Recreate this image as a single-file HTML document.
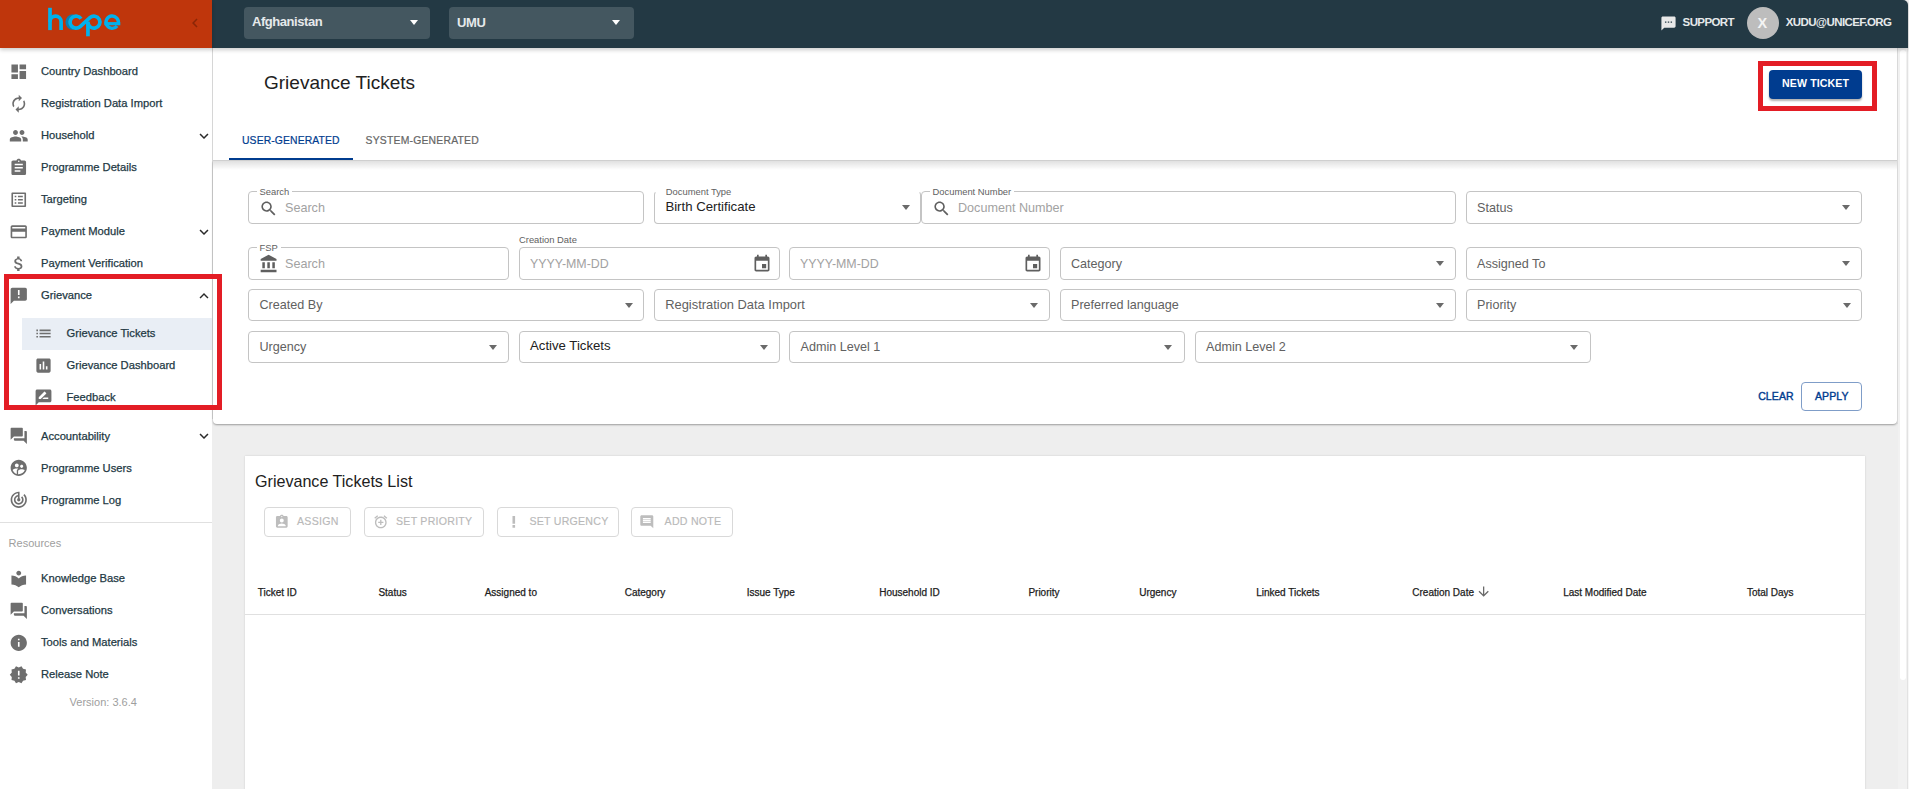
<!DOCTYPE html><html><head><meta charset="utf-8"><style>*{box-sizing:border-box;margin:0;padding:0}
html,body{width:1909px;height:789px;overflow:hidden;background:#eeeeee;font-family:"Liberation Sans",sans-serif}
.a{position:absolute}
.t{position:absolute;line-height:1;white-space:nowrap}
svg{display:block}
#hdr{left:212px;top:0;width:1696px;height:48px;background:#233944;border-top-right-radius:5px;z-index:2;box-shadow:0 2px 4px rgba(0,0,0,0.2)}
#logo{left:0;top:0;width:212px;height:48px;background:#bf360c;z-index:2;box-shadow:0 2px 4px rgba(0,0,0,0.2)}
#side{left:0;top:48px;width:212px;height:741px;background:#fff}
#sedge{left:212px;top:48px;width:1px;height:371px;background:#d6d6d6}
.sb{color:#233944;-webkit-text-stroke:0.25px #233944}
.dd{position:absolute;top:7px;height:32px;background:#445760;border-radius:4px}
.wt{color:#e6e9eb;font-weight:700}
#top{left:213px;top:48px;width:1684px;height:112px;background:#fff}
#filt{left:213px;top:161px;width:1684px;height:263px;background:#fff;border-bottom-right-radius:4px;border-bottom-left-radius:4px;box-shadow:0 1px 2px rgba(0,0,0,0.35)}
.fld{position:absolute;border:1px solid #c4c4c4;border-radius:4px;background:#fff}
.ph{color:#a2a2a2}
.pv{color:#616161}
.dk{color:#212121}
.lb{color:#616161;background:#fff;padding:0 3px}
.arr{position:absolute;width:0;height:0;border-left:4px solid transparent;border-right:4px solid transparent;border-top:5px solid #6a6a6a}
#tbl{left:245px;top:456px;width:1620px;height:340px;background:#fff;box-shadow:0 0 2px rgba(0,0,0,0.14)}
.btn{position:absolute;top:507px;height:30px;border:1px solid #d9d9d9;border-radius:4px}
.bt{color:#b9b9b9;letter-spacing:0.25px;-webkit-text-stroke:0.15px #b9b9b9}
.th{color:#212121;-webkit-text-stroke:0.25px #212121}
#scr{left:1898px;top:48px;width:11px;height:741px;background:#f1f1f1;border-right:2px solid #f7f7f7}
#thumb{left:2px;top:2px;width:6px;height:630px;background:#fff;border-radius:3px}
#scrl{left:1907px;top:48px;width:1px;height:741px;background:#e2e2e2}
#pedge{left:1897px;top:48px;width:1px;height:376px;background:#d9d9d9}
</style></head><body>
<div id="hdr" class="a"></div><div id="logo" class="a"></div>
<div id="side" class="a"></div><div id="sedge" class="a"></div>
<div id="top" class="a"></div><div id="filt" class="a"></div><div id="tbl" class="a"></div>
<div id="scr" class="a"><div id="thumb" class="a"></div></div><div id="scrl" class="a"></div><div id="pedge" class="a"></div>
<div class="a" style="left:0;top:0;z-index:3">
<svg class="a" style="left:40px;top:0" width="90" height="44" viewBox="40 0 90 44">
<path d="M73.30 28.15A6 6 0 0 1 73.30 16.15" fill="none" stroke="#0b7fb2" stroke-width="3.8"/>
<g fill="none" stroke="#00b1ec" stroke-width="3.7">
<path d="M50 7.8V30.1"/>
<path d="M50 21.75A5.55 5.55 0 0 1 61.1 21.75V30.1"/>
<path d="M81.01 18.71A6 6 0 1 0 80.13 26.59L89.92 17.71A6 6 0 1 1 87.95 22.15"/>
<path d="M87.95 21.5V36.3"/>
<path d="M104.40 23.7H120.3" stroke-width="3.2"/>
<path d="M118.20 23.7A6.2 6.2 0 1 0 117.09 25.97" stroke-width="3.4"/>
</g>
</svg>
<svg class="a" style="left:186px;top:14px" width="18" height="18" viewBox="0 0 24 24"><path fill="#8a2607" d="M15.41 7.41L14 6l-6 6 6 6 1.41-1.41L10.83 12z"/></svg>
<div class="dd" style="left:244px;width:186px"></div>
<div class="dd" style="left:449px;width:185px"></div>
<div class="t wt" style="left:252px;top:15.10px;font-size:13px;letter-spacing:-0.45px">Afghanistan</div>
<div class="t wt" style="left:457px;top:16.30px;font-size:13px;letter-spacing:-0.4px">UMU</div>
<div class="arr" style="left:410px;top:20px;border-top-color:#fff"></div>
<div class="arr" style="left:612px;top:20px;border-top-color:#fff"></div>
<svg class="a" style="left:1659.6px;top:14.6px" width="17" height="17" viewBox="0 0 24 24"><path fill="#e8e8e8" d="M20 2H4c-1.1 0-1.99.9-1.99 2L2 22l4-4h14c1.1 0 2-.9 2-2V4c0-1.1-.9-2-2-2zM9 11H7V9h2v2zm4 0h-2V9h2v2zm4 0h-2V9h2v2z"/></svg>
<div class="t wt" style="left:1682.6px;top:17.07px;font-size:11.5px;letter-spacing:-0.6px">SUPPORT</div>
<div class="a" style="left:1747px;top:7px;width:32px;height:32px;border-radius:50%;background:#bdbdbd"></div>
<div class="t wt" style="left:1757.6px;top:15.63px;font-size:14.5px;color:#f4f4f4">X</div>
<div class="t wt" style="left:1785.7px;top:17.07px;font-size:11.5px;letter-spacing:-0.6px">XUDU@UNICEF.ORG</div>
</div>
<div class="a" style="left:22px;top:318px;width:190px;height:32px;background:#e9eef5"></div>
<svg class="a" style="left:9.1px;top:61.5px" width="19.5" height="19.5" viewBox="0 0 24 24"><path fill="#6e6e6e" d="M3 13h8V3H3v10zm0 8h8v-6H3v6zm10 0h8V11h-8v10zm0-18v6h8V3h-8z"/></svg>
<div class="t sb" style="left:41px;top:65.52px;font-size:11.2px;">Country Dashboard</div>
<svg class="a" style="left:9.1px;top:93.5px" width="19.5" height="19.5" viewBox="0 0 24 24"><path fill="#6e6e6e" d="M12 6v3l4-4-4-4v3c-4.42 0-8 3.58-8 8 0 1.57.46 3.03 1.24 4.26L6.7 14.8c-.45-.83-.7-1.79-.7-2.8 0-3.31 2.69-6 6-6zm6.76 1.74L17.3 9.2c.44.84.7 1.79.7 2.8 0 3.31-2.69 6-6 6v-3l-4 4 4 4v-3c4.42 0 8-3.58 8-8 0-1.57-.46-3.030-1.24-4.26z"/></svg>
<div class="t sb" style="left:41px;top:97.52px;font-size:11.2px;">Registration Data Import</div>
<svg class="a" style="left:9.1px;top:125.5px" width="19.5" height="19.5" viewBox="0 0 24 24"><path fill="#6e6e6e" d="M16 11c1.66 0 2.99-1.34 2.99-3S17.66 5 16 5c-1.66 0-3 1.34-3 3s1.34 3 3 3zm-8 0c1.66 0 2.99-1.34 2.99-3S9.66 5 8 5C6.34 5 5 6.34 5 8s1.34 3 3 3zm0 2c-2.33 0-7 1.17-7 3.5V19h14v-2.5c0-2.33-4.67-3.5-7-3.5zm8 0c-.29 0-.62.02-.97.05 1.16.84 1.970 1.97 1.97 3.45V19h6v-2.5c0-2.33-4.67-3.5-7-3.5z"/></svg>
<div class="t sb" style="left:41px;top:129.52px;font-size:11.2px;">Household</div>
<svg class="a" style="left:194.5px;top:127px" width="18" height="18" viewBox="0 0 24 24"><path fill="#2a2a2a" d="M16.59 8.59L12 13.17 7.41 8.59 6 10l6 6 6-6z"/></svg>
<svg class="a" style="left:9.1px;top:157.5px" width="19.5" height="19.5" viewBox="0 0 24 24"><path fill="#6e6e6e" d="M19 3h-4.18C14.4 1.84 13.3 1 12 1c-1.3 0-2.4.84-2.82 2H5c-1.1 0-2 .9-2 2v14c0 1.1.9 2 2 2h14c1.1 0 2-.9 2-2V5c0-1.1-.9-2-2-2zm-7 0c.55 0 1 .45 1 1s-.45 1-1 1-1-.45-1-1 .45-1 1-1zm2 14H7v-2h7v2zm3-4H7v-2h10v2zm0-4H7V7h10v2z"/></svg>
<div class="t sb" style="left:41px;top:161.52px;font-size:11.2px;">Programme Details</div>
<svg class="a" style="left:9.1px;top:189.5px" width="19.5" height="19.5" viewBox="0 0 24 24"><path fill="#6e6e6e" d="M19 5v14H5V5h14m1.1-2H3.9c-.5 0-.9.4-.9.9v16.2c0 .4.4.9.9.9h16.2c.4 0 .9-.5.9-.9V3.9c0-.5-.5-.9-.9-.9zM11 7h6v2h-6V7zm0 4h6v2h-6v-2zm0 4h6v2h-6zM7 7h2v2H7zm0 4h2v2H7zm0 4h2v2H7z"/></svg>
<div class="t sb" style="left:41px;top:193.52px;font-size:11.2px;">Targeting</div>
<svg class="a" style="left:9.1px;top:221.5px" width="19.5" height="19.5" viewBox="0 0 24 24"><path fill="#6e6e6e" d="M20 4H4c-1.11 0-1.99.89-1.99 2L2 18c0 1.11.89 2 2 2h16c1.11 0 2-.89 2-2V6c0-1.11-.89-2-2-2zm0 14H4v-6h16v6zm0-10H4V6h16v2z"/></svg>
<div class="t sb" style="left:41px;top:225.52px;font-size:11.2px;">Payment Module</div>
<svg class="a" style="left:194.5px;top:223px" width="18" height="18" viewBox="0 0 24 24"><path fill="#2a2a2a" d="M16.59 8.59L12 13.17 7.41 8.59 6 10l6 6 6-6z"/></svg>
<svg class="a" style="left:9.1px;top:253.5px" width="19.5" height="19.5" viewBox="0 0 24 24"><path fill="#6e6e6e" d="M11.8 10.9c-2.27-.59-3-1.2-3-2.15 0-1.09 1.01-1.85 2.7-1.85 1.78 0 2.44.85 2.5 2.1h2.21c-.07-1.72-1.12-3.3-3.21-3.81V3h-3v2.16c-1.94.42-3.5 1.68-3.5 3.61 0 2.31 1.91 3.46 4.7 4.13 2.5.6 3 1.48 3 2.41 0 .69-.49 1.79-2.7 1.79-2.06 0-2.87-.92-2.98-2.1h-2.2c.12 2.19 1.76 3.42 3.68 3.83V21h3v-2.15c1.95-.37 3.5-1.5 3.5-3.55 0-2.84-2.43-3.81-4.7-4.4z"/></svg>
<div class="t sb" style="left:41px;top:257.52px;font-size:11.2px;">Payment Verification</div>
<svg class="a" style="left:9.1px;top:285.5px" width="19.5" height="19.5" viewBox="0 0 24 24"><path fill="#6e6e6e" d="M20 2H4c-1.1 0-1.99.9-1.99 2L2 22l4-4h14c1.1 0 2-.9 2-2V4c0-1.1-.9-2-2-2zm-7 9h-2V5h2v6zm0 4h-2v-2h2v2z"/></svg>
<div class="t sb" style="left:41px;top:289.52px;font-size:11.2px;">Grievance</div>
<svg class="a" style="left:194.5px;top:287px" width="18" height="18" viewBox="0 0 24 24"><path fill="#2a2a2a" d="M12 8l-6 6 1.41 1.41L12 10.83l4.59 4.58L18 14z"/></svg>
<svg class="a" style="left:9.1px;top:425.8px" width="19.5" height="19.5" viewBox="0 0 24 24"><path fill="#6e6e6e" d="M21 6h-2v9H6v2c0 .55.45 1 1 1h11l4 4V7c0-.55-.45-1-1-1zm-4 6V3c0-.55-.45-1-1-1H3c-.55 0-1 .45-1 1v14l4-4h10c.55 0 1-.45 1-1z"/></svg>
<div class="t sb" style="left:41px;top:430.52px;font-size:11.2px;">Accountability</div>
<svg class="a" style="left:194.5px;top:426.5px" width="18" height="18" viewBox="0 0 24 24"><path fill="#2a2a2a" d="M16.59 8.59L12 13.17 7.41 8.59 6 10l6 6 6-6z"/></svg>
<svg class="a" style="left:9.1px;top:457.8px" width="19.5" height="19.5" viewBox="0 0 24 24"><path fill="#6e6e6e" d="M11.99 2c-5.52 0-10 4.48-10 10s4.48 10 10 10 10-4.48 10-10-4.48-10-10-10zm3.61 6.34c1.07 0 1.93.86 1.93 1.93 0 1.07-.86 1.93-1.93 1.93-1.07 0-1.93-.86-1.93-1.93-.01-1.07.86-1.93 1.930-1.93zm-6-1.58c1.3 0 2.36 1.06 2.36 2.36 0 1.3-1.06 2.36-2.36 2.36s-2.36-1.06-2.36-2.36c0-1.31 1.05-2.36 2.36-2.36zm0 9.13v3.75c-2.4-.75-4.3-2.6-5.14-4.96 1.05-1.12 3.67-1.69 5.14-1.69.53 0 1.2.08 1.82.21-1.44.76-1.82 1.77-1.82 2.69zM11.99 20c-.27 0-.53-.01-.79-.04v-4.07c0-1.42 2.94-2.13 4.4-2.13 1.07 0 2.92.39 3.84 1.15-1.17 2.92-4.02 4.99-7.45 5.09z"/></svg>
<div class="t sb" style="left:41px;top:462.52px;font-size:11.2px;">Programme Users</div>
<svg class="a" style="left:9.1px;top:489.8px" width="19.5" height="19.5" viewBox="0 0 24 24"><path fill="#6e6e6e" d="M19.07 4.93l-1.41 1.41C19.1 7.79 20 9.79 20 12c0 4.42-3.58 8-8 8s-8-3.58-8-8c0-4.08 3.05-7.44 7-7.93v2.02C8.16 6.57 6 9.03 6 12c0 3.31 2.69 6 6 6s6-2.69 6-6c0-1.66-.67-3.16-1.76-4.24l-1.41 1.41C15.55 9.9 16 10.9 16 12c0 2.21-1.79 4-4 4s-4-1.79-4-4c0-1.86 1.28-3.41 3-3.86v2.14c-.6.35-1 .98-1 1.72 0 1.1.9 2 2 2s2-.9 2-2c0-.74-.4-1.38-1-1.72V2h-1C6.48 2 2 6.48 2 12s4.48 10 10 10 10-4.48 10-10c0-2.760-1.12-5.26-2.93-7.07z"/></svg>
<div class="t sb" style="left:41px;top:494.52px;font-size:11.2px;">Programme Log</div>
<svg class="a" style="left:9.1px;top:568.5px" width="19.5" height="19.5" viewBox="0 0 24 24"><path fill="#6e6e6e" d="M12 11.55C9.64 9.35 6.48 8 3 8v11c3.48 0 6.64 1.35 9 3.55 2.36-2.19 5.52-3.55 9-3.55V8c-3.48 0-6.64 1.35-9 3.55zM12 8c1.66 0 3-1.34 3-3s-1.34-3-3-3-3 1.34-3 3 1.34 3 3 3z"/></svg>
<div class="t sb" style="left:41px;top:572.52px;font-size:11.2px;">Knowledge Base</div>
<svg class="a" style="left:9.1px;top:600.5px" width="19.5" height="19.5" viewBox="0 0 24 24"><path fill="#6e6e6e" d="M21 6h-2v9H6v2c0 .55.45 1 1 1h11l4 4V7c0-.55-.45-1-1-1zm-4 6V3c0-.55-.45-1-1-1H3c-.55 0-1 .45-1 1v14l4-4h10c.55 0 1-.45 1-1z"/></svg>
<div class="t sb" style="left:41px;top:604.52px;font-size:11.2px;">Conversations</div>
<svg class="a" style="left:9.1px;top:632.5px" width="19.5" height="19.5" viewBox="0 0 24 24"><path fill="#6e6e6e" d="M12 2C6.48 2 2 6.48 2 12s4.48 10 10 10 10-4.48 10-10S17.52 2 12 2zm1 15h-2v-6h2v6zm0-8h-2V7h2v2z"/></svg>
<div class="t sb" style="left:41px;top:636.52px;font-size:11.2px;">Tools and Materials</div>
<svg class="a" style="left:9.1px;top:664.5px" width="19.5" height="19.5" viewBox="0 0 24 24"><path fill="#6e6e6e" d="M23 12l-2.44-2.78.34-3.68-3.61-.82-1.89-3.18L12 3 8.6 1.54 6.71 4.72l-3.61.81.34 3.68L1 12l2.44 2.78-.34 3.69 3.61.82 1.89 3.18L12 21l3.4 1.46 1.89-3.18 3.61-.82-.34-3.68L23 12zm-10 5h-2v-2h2v2zm0-4h-2V7h2v6z"/></svg>
<div class="t sb" style="left:41px;top:668.52px;font-size:11.2px;">Release Note</div>
<svg class="a" style="left:34.3px;top:324.2px" width="19" height="19" viewBox="0 0 24 24"><path fill="#6e6e6e" d="M3 13h2v-2H3v2zm0 4h2v-2H3v2zm0-8h2V7H3v2zm4 4h14v-2H7v2zm0 4h14v-2H7v2zM7 7v2h14V7H7z"/></svg>
<div class="t sb" style="left:66.5px;top:327.52px;font-size:11.2px;">Grievance Tickets</div>
<svg class="a" style="left:34.3px;top:356.2px" width="19" height="19" viewBox="0 0 24 24"><path fill="#6e6e6e" d="M19 3H5c-1.1 0-2 .9-2 2v14c0 1.1.9 2 2 2h14c1.1 0 2-.9 2-2V5c0-1.1-.9-2-2-2zM9 17H7v-7h2v7zm4 0h-2V7h2v10zm4 0h-2v-4h2v4z"/></svg>
<div class="t sb" style="left:66.5px;top:359.52px;font-size:11.2px;">Grievance Dashboard</div>
<svg class="a" style="left:34.3px;top:388.2px" width="19" height="19" viewBox="0 0 24 24"><path fill="#6e6e6e" d="M20 2H4c-1.1 0-1.99.9-1.99 2L2 22l4-4h14c1.1 0 2-.9 2-2V4c0-1.1-.9-2-2-2zM6 14v-2.47l6.88-6.88c.2-.2.51-.2.71 0l1.77 1.77c.2.2.2.51 0 .71L8.47 14H6zm12 0h-7.5l2-2H18v2z"/></svg>
<div class="t sb" style="left:66.5px;top:391.52px;font-size:11.2px;">Feedback</div>
<div class="a" style="left:0;top:522px;width:212px;height:1px;background:#e0e0e0"></div>
<div class="t " style="left:8.6px;top:538.49px;font-size:11px;color:#9e9e9e">Resources</div>
<div class="t " style="left:69.6px;top:696.89px;font-size:11px;color:#9e9e9e">Version: 3.6.4</div>
<div class="a" style="left:4px;top:274px;width:218px;height:136px;border:5px solid #e31d25"></div>
<div class="t " style="left:264px;top:72.92px;font-size:19px;color:#212121">Grievance Tickets</div>
<div class="a" style="left:1769px;top:70px;width:93px;height:29px;background:#003c8f;border-radius:4px;box-shadow:0 2px 2px rgba(0,0,0,0.3)"></div>
<div class="t wt" style="left:1782px;top:78.03px;font-size:10.6px;letter-spacing:0.12px;color:#fff">NEW TICKET</div>
<div class="a" style="left:1758px;top:61px;width:119px;height:50px;border:5px solid #e31d25"></div>
<div class="t " style="left:242px;top:136.20px;font-size:10.4px;color:#003c8f;letter-spacing:0.1px;-webkit-text-stroke:0.2px #003c8f">USER-GENERATED</div>
<div class="t " style="left:365.6px;top:136.20px;font-size:10.4px;color:#666;letter-spacing:0.2px;-webkit-text-stroke:0.2px #666">SYSTEM-GENERATED</div>
<div class="a" style="left:229px;top:158px;width:124px;height:2px;background:#003c8f"></div>
<div class="a" style="left:213px;top:160px;width:1684px;height:1px;background:#cfcfcf"></div>
<div class="a" style="left:213px;top:161px;width:1684px;height:9px;background:linear-gradient(rgba(0,0,0,0.12),rgba(0,0,0,0))"></div>
<div class="fld" style="left:248px;top:191px;width:396px;height:33px"></div>
<div class="t lb" style="left:259.5px;top:186.64px;font-size:9.4px;padding:0 3px;margin-left:-3px">Search</div>
<svg class="a" style="left:258.8px;top:198.6px" width="19.2" height="19.2" viewBox="0 0 24 24"><path fill="#5f5f5f" d="M15.5 14h-.79l-.28-.27C15.41 12.59 16 11.11 16 9.5 16 5.91 13.09 3 9.5 3S3 5.91 3 9.5 5.91 16 9.5 16c1.61 0 3.090-.59 4.23-1.57l.27.28v.79l5 4.99L20.49 19l-4.99-5zm-6 0C7.01 14 5 11.99 5 9.5S7.01 5 9.5 5 14 7.01 14 9.5 11.99 14 9.5 14z"/></svg>
<div class="t ph" style="left:285px;top:202.33px;font-size:12.6px;">Search</div>
<div class="fld" style="left:654px;top:191px;width:267px;height:33px;border-top-color:transparent"></div>
<div class="t " style="left:665.8px;top:187.34px;font-size:9.4px;color:#616161">Document Type</div>
<div class="t dk" style="left:665.4px;top:200.23px;font-size:13.2px;">Birth Certificate</div>
<div class="arr" style="left:901.5px;top:205px"></div>
<div class="fld" style="left:921px;top:191px;width:535px;height:33px"></div>
<div class="t lb" style="left:932.5px;top:186.64px;font-size:9.4px;padding:0 3px;margin-left:-3px">Document Number</div>
<svg class="a" style="left:931.5px;top:198.6px" width="19.2" height="19.2" viewBox="0 0 24 24"><path fill="#5f5f5f" d="M15.5 14h-.79l-.28-.27C15.41 12.59 16 11.11 16 9.5 16 5.91 13.09 3 9.5 3S3 5.91 3 9.5 5.91 16 9.5 16c1.61 0 3.090-.59 4.23-1.57l.27.28v.79l5 4.99L20.49 19l-4.99-5zm-6 0C7.01 14 5 11.99 5 9.5S7.01 5 9.5 5 14 7.01 14 9.5 11.99 14 9.5 14z"/></svg>
<div class="t ph" style="left:958px;top:202.33px;font-size:12.6px;">Document Number</div>
<div class="fld" style="left:1466px;top:191px;width:396px;height:33px"></div>
<div class="t pv" style="left:1477px;top:202.33px;font-size:12.6px;">Status</div>
<div class="arr" style="left:1842px;top:205px"></div>
<div class="fld" style="left:248px;top:247px;width:261px;height:33px"></div>
<div class="t lb" style="left:259.5px;top:243.04px;font-size:9.4px;padding:0 3px;margin-left:-3px">FSP</div>
<svg class="a" style="left:258.5px;top:253.8px" width="20" height="20" viewBox="0 0 24 24"><path fill="#5f5f5f" d="M4 10v7h3v-7H4zm6 0v7h3v-7h-3zM2 22h19v-3H2v3zm14-12v7h3v-7h-3zm-4.5-9L2 6v2h19V6l-9.5-5z"/></svg>
<div class="t ph" style="left:285px;top:258.33px;font-size:12.6px;">Search</div>
<div class="t " style="left:519px;top:235.04px;font-size:9.4px;color:#616161">Creation Date</div>
<div class="fld" style="left:519px;top:247px;width:261px;height:33px"></div>
<div class="t ph" style="left:530px;top:257.50px;font-size:12.4px;">YYYY-MM-DD</div>
<svg class="a" style="left:752.3px;top:253.8px" width="20" height="20" viewBox="0 0 24 24"><path fill="#5f5f5f" d="M17 12h-5v5h5v-5zM16 1v2H8V1H6v2H5c-1.11 0-1.99.9-1.99 2L3 19c0 1.1.89 2 2 2h14c1.1 0 2-.9 2-2V5c0-1.1-.9-2-2-2h-1V1h-2zm3 18H5V8h14v11z"/></svg>
<div class="fld" style="left:789px;top:247px;width:261px;height:33px"></div>
<div class="t ph" style="left:800px;top:257.50px;font-size:12.4px;">YYYY-MM-DD</div>
<svg class="a" style="left:1023.3px;top:253.8px" width="20" height="20" viewBox="0 0 24 24"><path fill="#5f5f5f" d="M17 12h-5v5h5v-5zM16 1v2H8V1H6v2H5c-1.11 0-1.99.9-1.99 2L3 19c0 1.1.89 2 2 2h14c1.1 0 2-.9 2-2V5c0-1.1-.9-2-2-2h-1V1h-2zm3 18H5V8h14v11z"/></svg>
<div class="fld" style="left:1060px;top:247px;width:396px;height:33px"></div>
<div class="t pv" style="left:1071px;top:258.33px;font-size:12.6px;">Category</div>
<div class="arr" style="left:1436px;top:261px"></div>
<div class="fld" style="left:1466px;top:247px;width:396px;height:33px"></div>
<div class="t pv" style="left:1477px;top:258.33px;font-size:12.6px;">Assigned To</div>
<div class="arr" style="left:1842px;top:261px"></div>
<div class="fld" style="left:248px;top:289px;width:396px;height:32px"></div>
<div class="t pv" style="left:259.5px;top:298.63px;font-size:12.6px;">Created By</div>
<div class="arr" style="left:624.5px;top:303px"></div>
<div class="fld" style="left:654px;top:289px;width:396px;height:32px"></div>
<div class="t pv" style="left:665.2px;top:299.38px;font-size:12.9px;">Registration Data Import</div>
<div class="arr" style="left:1029.5px;top:303px"></div>
<div class="fld" style="left:1060px;top:289px;width:396px;height:32px"></div>
<div class="t pv" style="left:1071px;top:298.63px;font-size:12.6px;">Preferred language</div>
<div class="arr" style="left:1435.5px;top:303px"></div>
<div class="fld" style="left:1466px;top:289px;width:396px;height:32px"></div>
<div class="t pv" style="left:1477px;top:298.63px;font-size:12.6px;">Priority</div>
<div class="arr" style="left:1842.5px;top:303px"></div>
<div class="fld" style="left:248px;top:331px;width:261px;height:32px"></div>
<div class="t pv" style="left:259.5px;top:341.33px;font-size:12.6px;">Urgency</div>
<div class="arr" style="left:489px;top:345px"></div>
<div class="fld" style="left:519px;top:331px;width:261px;height:32px"></div>
<div class="t dk" style="left:530px;top:338.83px;font-size:13.2px;">Active Tickets</div>
<div class="arr" style="left:760px;top:345px"></div>
<div class="fld" style="left:789px;top:331px;width:396px;height:32px"></div>
<div class="t pv" style="left:800.5px;top:341.33px;font-size:12.6px;">Admin Level 1</div>
<div class="arr" style="left:1164px;top:345px"></div>
<div class="fld" style="left:1195px;top:331px;width:396px;height:32px"></div>
<div class="t pv" style="left:1206px;top:341.33px;font-size:12.6px;">Admin Level 2</div>
<div class="arr" style="left:1570px;top:345px"></div>
<div class="t " style="left:1758.2px;top:391.11px;font-size:10.5px;color:#003c8f;letter-spacing:0.1px;-webkit-text-stroke:0.4px #003c8f">CLEAR</div>
<div class="a" style="left:1801px;top:382px;width:61px;height:29px;border:1px solid #7f9dc8;border-radius:4px"></div>
<div class="t " style="left:1815px;top:391.11px;font-size:10.5px;color:#003c8f;letter-spacing:0.1px;-webkit-text-stroke:0.4px #003c8f">APPLY</div>
<div class="t " style="left:255px;top:473.07px;font-size:16.1px;color:#212121">Grievance Tickets List</div>
<div class="btn" style="left:264px;width:87px"></div>
<svg class="a" style="left:274px;top:513.5px" width="15.6" height="15.6" viewBox="0 0 24 24"><path fill="#bdbdbd" d="M19 3h-4.18C14.4 1.84 13.3 1 12 1c-1.3 0-2.4.84-2.82 2H5c-1.1 0-2 .9-2 2v14c0 1.1.9 2 2 2h14c1.1 0 2-.9 2-2V5c0-1.1-.9-2-2-2zm-7 0c.55 0 1 .45 1 1s-.45 1-1 1-1-.45-1-1 .45-1 1-1zm0 4c1.66 0 3 1.34 3 3s-1.34 3-3 3-3-1.34-3-3 1.34-3 3-3zm6 12H6v-1.4c0-2 4-3.1 6-3.1s6 1.1 6 3.1V19z"/></svg>
<div class="t bt" style="left:297px;top:516.23px;font-size:10.6px;">ASSIGN</div>
<div class="btn" style="left:364px;width:120px"></div>
<svg class="a" style="left:373px;top:513.5px" width="15.6" height="15.6" viewBox="0 0 24 24"><path fill="#bdbdbd" d="M7.88 3.39L6.6 1.86 2 5.71l1.29 1.53 4.59-3.85zM22 5.72l-4.6-3.86-1.29 1.53 4.6 3.86L22 5.72zM12 4c-4.97 0-9 4.03-9 9s4.02 9 9 9c4.97 0 9-4.03 9-9s-4.03-9-9-9zm0 16c-3.87 0-7-3.13-7-7s3.13-7 7-7 7 3.13 7 7-3.13 7-7 7zm1-11h-2v3H8v2h3v3h2v-3h3v-2h-3V9z"/></svg>
<div class="t bt" style="left:396px;top:516.23px;font-size:10.6px;">SET PRIORITY</div>
<div class="btn" style="left:497px;width:122px"></div>
<svg class="a" style="left:506px;top:513.5px" width="15.6" height="15.6" viewBox="0 0 24 24"><path fill="#bdbdbd" d="M10 3h4v12h-4zM10 17h4v4h-4z"/></svg>
<div class="t bt" style="left:529.4px;top:516.23px;font-size:10.6px;">SET URGENCY</div>
<div class="btn" style="left:631px;width:102px"></div>
<svg class="a" style="left:639px;top:513.5px" width="15.6" height="15.6" viewBox="0 0 24 24"><path fill="#bdbdbd" d="M21.99 4c0-1.1-.89-2-1.99-2H4c-1.1 0-2 .9-2 2v12c0 1.1.9 2 2 2h14l4 4-.01-18zM18 14H6v-2h12v2zm0-3H6V9h12v2zm0-3H6V6h12v2z"/></svg>
<div class="t bt" style="left:664.6px;top:516.23px;font-size:10.6px;">ADD NOTE</div>
<div class="t th" style="left:257.7px;top:587.83px;font-size:10px;">Ticket ID</div>
<div class="t th" style="left:378.4px;top:587.83px;font-size:10px;">Status</div>
<div class="t th" style="left:484.7px;top:587.83px;font-size:10px;">Assigned to</div>
<div class="t th" style="left:624.7px;top:587.83px;font-size:10px;">Category</div>
<div class="t th" style="left:746.7px;top:587.83px;font-size:10px;">Issue Type</div>
<div class="t th" style="left:879.2px;top:587.83px;font-size:10px;">Household ID</div>
<div class="t th" style="left:1028.4px;top:587.83px;font-size:10px;">Priority</div>
<div class="t th" style="left:1139.2px;top:587.83px;font-size:10px;">Urgency</div>
<div class="t th" style="left:1256.2px;top:587.83px;font-size:10px;">Linked Tickets</div>
<div class="t th" style="left:1412.3px;top:587.83px;font-size:10px;">Creation Date</div>
<div class="t th" style="left:1563.2px;top:587.83px;font-size:10px;">Last Modified Date</div>
<div class="t th" style="left:1746.9px;top:587.83px;font-size:10px;">Total Days</div>
<svg class="a" style="left:1475.9px;top:583.9px" width="15.3" height="15.3" viewBox="0 0 24 24"><path fill="#6a6a6a" d="M20 12l-1.41-1.41L13 16.17V4h-2v12.17l-5.58-5.59L4 12l8 8 8-8z"/></svg>
<div class="a" style="left:245px;top:614px;width:1620px;height:1px;background:#e0e0e0"></div>
</body></html>
